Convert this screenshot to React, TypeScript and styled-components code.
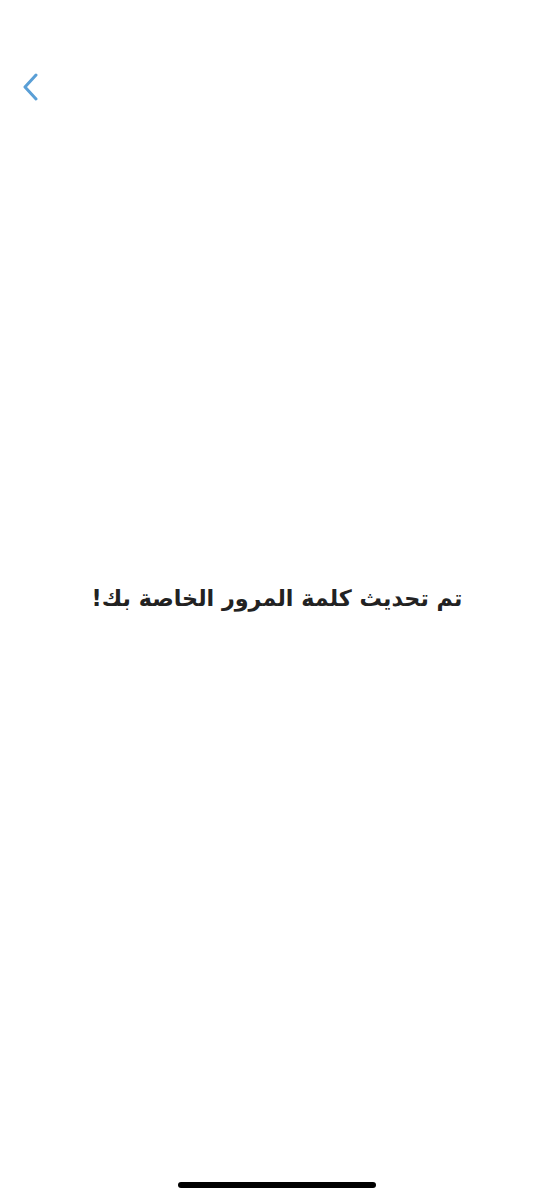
import styled, { createGlobalStyle } from "styled-components";

const GlobalStyle = createGlobalStyle`
    html, body {
        margin: 0;
        padding: 0;
        background: #fff;
    }
    #root {
        height: 100%;
    }
`;

const Screen = styled.div`
    width: 554px;
    height: 1199px;
    display: flex;
    flex-direction: column;
    background: #fff;
    font-family: "DejaVu Sans", "Noto Sans", sans-serif;
`;

const TopBar = styled.div`
    height: 130px;
    display: flex;
    align-items: flex-start;
    padding: 72px 0 0 18px;
    box-sizing: border-box;
`;

const BackButton = styled.button`
    width: 24px;
    height: 30px;
    padding: 0;
    border: none;
    background: none;
    cursor: pointer;
    display: flex;
    align-items: center;
    justify-content: center;
`;

const Body = styled.div`
    flex: 1;
    display: flex;
    align-items: flex-start;
    justify-content: center;
    padding-top: 455px;
`;

const Message = styled.h1`
    margin: 0;
    direction: rtl;
    font-size: 22.3px;
    font-weight: 700;
    color: #222;
`;

const HomeBar = styled.div`
    display: flex;
    justify-content: center;
    padding-bottom: 11px;
`;

const Indicator = styled.div`
    width: 198px;
    height: 6px;
    border-radius: 3px;
    background: #000;
`;

const App = () => {
    return (
        <>
            <GlobalStyle />
            <Screen>
                <TopBar>
                    <BackButton aria-label="رجوع">
                        <svg width="18" height="28" viewBox="0 0 18 28" fill="none">
                            <path
                                d="M15 2 L4 14 L15 26"
                                stroke="#5a9fd6"
                                strokeWidth="3"
                                strokeLinecap="round"
                                strokeLinejoin="round"
                            />
                        </svg>
                    </BackButton>
                </TopBar>
                <Body>
                    <Message>تم تحديث كلمة المرور الخاصة بك!</Message>
                </Body>
                <HomeBar>
                    <Indicator />
                </HomeBar>
            </Screen>
        </>
    );
};

export default App;
